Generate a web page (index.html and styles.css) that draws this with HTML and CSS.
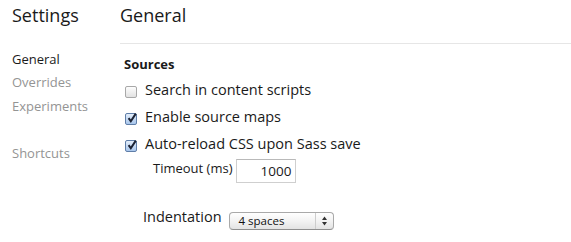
FILE: index.html
```html
<!DOCTYPE html>
<html>
<head>
<meta charset="utf-8">
<link rel="stylesheet" href="styles.css">
</head>
<body>
<div class="app">
  <aside class="sidebar">
    <h1 class="title">Settings</h1>
    <nav class="nav">
      <div class="nav-item active">General</div>
      <div class="nav-item">Overrides</div>
      <div class="nav-item">Experiments</div>
      <div class="nav-item gap">Shortcuts</div>
    </nav>
  </aside>
  <main class="main">
    <h2 class="title header">General</h2>
    <section class="content">
      <div class="section-title">Sources</div>
      <label class="row">
        <span class="cb"></span>
        <span>Search in content scripts</span>
      </label>
      <label class="row">
        <span class="cb checked"><svg viewBox="0 0 12 12" width="12" height="12"><path d="M2.6 6.2 L4.8 9.2 L9.8 1.6" fill="none" stroke="#1b2233" stroke-width="2"/></svg></span>
        <span>Enable source maps</span>
      </label>
      <label class="row">
        <span class="cb checked"><svg viewBox="0 0 12 12" width="12" height="12"><path d="M2.6 6.2 L4.8 9.2 L9.8 1.6" fill="none" stroke="#1b2233" stroke-width="2"/></svg></span>
        <span>Auto-reload CSS upon Sass save</span>
      </label>
      <div class="sub-row">
        <span class="sub-label">Timeout (ms)</span>
        <span class="input">1000</span>
      </div>
      <div class="select-row">
        <span class="select-label">Indentation</span>
        <div class="select">
          <span class="select-text">4 spaces</span>
          <span class="select-arrows"><svg viewBox="0 0 7 10" width="7" height="10"><path d="M3.5 0.5 L6 4 L1 4 Z M3.5 9.5 L6 6 L1 6 Z" fill="#333"/></svg></span>
        </div>
      </div>
    </section>
  </main>
</div>
</body>
</html>
```
FILE: styles.css
```css
html, body {
  margin: 0;
  padding: 0;
  background: #fff;
}
body {
  font-family: "Open Sans", "DejaVu Sans", sans-serif;
  color: #1a1a1a;
}
.app {
  display: flex;
  width: 571px;
  height: 242px;
  overflow: hidden;
}
.sidebar {
  width: 108px;
  padding-left: 12px;
  flex: none;
}
.title {
  margin: 0;
  font-size: 18px;
  font-weight: normal;
  line-height: 24px;
  padding-top: 3px;
  height: 40px;
  color: #1a1a1a;
}
.header {
  border-bottom: 1px solid #e6e6e6;
  padding-bottom: 0;
}
.nav {
  padding-top: 4.5px;
}
.nav-item {
  font-size: 13px;
  line-height: 23.5px;
  color: #949494;
}
.nav-item.active {
  color: #1a1a1a;
}
.nav-item.gap {
  margin-top: 23.5px;
}
.main {
  flex: 1;
}
.content {
  padding-left: 4px;
}
.section-title {
  font-size: 13px;
  font-weight: bold;
  line-height: 18px;
  margin-top: 10.5px;
  margin-bottom: 3.5px;
}
.row {
  display: flex;
  align-items: flex-start;
  font-size: 14.5px;
  line-height: 27px;
  height: 27px;
}
.cb {
  width: 10px;
  height: 10px;
  margin: 10px 8px 0 1px;
  border: 1px solid #a8a8a8;
  border-radius: 2px;
  background: linear-gradient(#fdfdfd, #e2e2e2);
  flex: none;
  position: relative;
}
.cb.checked {
  border-color: #5f7ea8;
  background: linear-gradient(#e4eefa, #a8c6ec);
}
.cb svg {
  position: absolute;
  left: 0;
  top: -2px;
}
.sub-row {
  display: flex;
  align-items: flex-start;
  margin-top: 2px;
  padding-left: 29px;
}
.sub-label {
  font-size: 13px;
  line-height: 18px;
  margin-right: 4px;
}
.input {
  display: block;
  box-sizing: border-box;
  width: 60px;
  height: 24px;
  border: 1px solid #cfcfcf;
  border-top-color: #b9b9b9;
  font-size: 13.5px;
  line-height: 22px;
  text-align: right;
  padding-right: 4px;
}
.select-row {
  display: flex;
  align-items: flex-start;
  margin-top: 21px;
  padding-left: 19px;
}
.select-label {
  font-size: 14.5px;
  line-height: 20px;
  margin-top: 3px;
  margin-right: 7px;
}
.select {
  display: flex;
  box-sizing: border-box;
  width: 105px;
  height: 18px;
  margin-top: 8px;
  border: 1px solid #a9a9a9;
  border-bottom-color: #8f8f8f;
  border-radius: 4px;
  background: linear-gradient(#ffffff, #f3f3f3 50%, #e3e3e3);
}
.select-text {
  flex: 1;
  font-size: 11.5px;
  line-height: 16px;
  padding-left: 9px;
  color: #111;
}
.select-arrows {
  width: 17px;
  border-left: 1px solid #cdcdcd;
  display: flex;
  align-items: center;
  justify-content: center;
}
```
